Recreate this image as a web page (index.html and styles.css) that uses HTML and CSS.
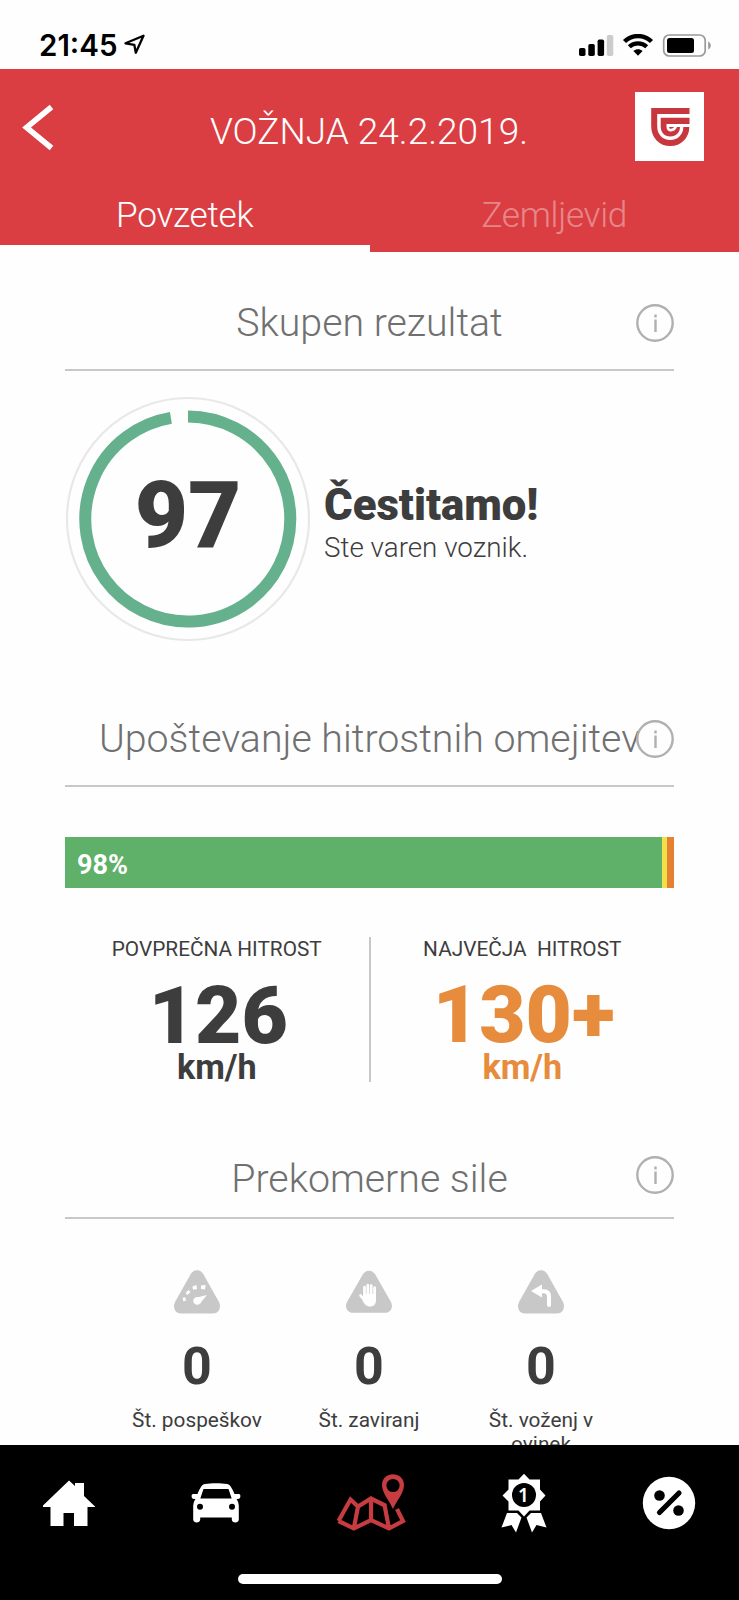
FILE: index.html
```html
<!DOCTYPE html>
<html lang="sl">
<head>
  <meta charset="UTF-8">
  <title>Vožnja 24.2.2019.</title>
  <meta name="viewport" content="width=device-width, initial-scale=1.0">
  <link rel="stylesheet" href="styles.css">
</head>
<body>
  <div class="status-bar">
    <div class="clock">
      <span class="time">21:45</span>
      <svg class="location" width="22" height="22" viewBox="0 0 22 22"><path d="M1.500 9.300 L19.500 1.800 L11.800 18.800 L10.300 10.800 Z" fill="none" stroke="#000" stroke-width="2.300" stroke-linejoin="round"/></svg>
    </div>
    <svg class="signals" width="134" height="24" viewBox="0 0 134 24">
      <rect x="1" y="14" width="6.5" height="8" rx="1.7"/>
      <rect x="10.300" y="10" width="6.500" height="12" rx="1.7"/>
      <rect x="19.600" y="5.500" width="6.500" height="16.500" rx="1.7"/>
      <rect x="28.800" y="1" width="6.500" height="21" rx="1.7" fill="#ccc"/>
      <path d="M46.500 7.500 C54 .2 66 .2 73.500 7.500" fill="none" stroke="#000" stroke-width="4.400"/>
      <path d="M51.300 12.800 C56 8.300 64 8.300 68.700 12.800" fill="none" stroke="#000" stroke-width="4.200"/>
      <path d="M55.400 17 C58 14.600 62 14.600 64.600 17 L60 21.700 Z"/>
      <rect x="85.700" y="1" width="41.500" height="21" rx="5.500" fill="none" stroke="#999" stroke-width="1.700"/>
      <rect x="89" y="4" width="27" height="15" rx="2.500"/>
      <path d="M130.200 7.500 C133.600 9 133.600 14 130.200 15.500 Z" fill="#999"/>
    </svg>
  </div>

  <div class="header">
    <div class="title-row">
      <svg class="back" width="36" height="50" viewBox="0 0 36 50"><path d="M31.500 5 L6.500 25.500 L31.500 46" fill="none" stroke="#fff" stroke-width="5.500"/></svg>
      <h1>VOŽNJA 24.2.2019.</h1>
      <div class="logo">
        <svg width="40" height="40" viewBox="0 0 40 40">
          <path d="M39.500 4 H4.200 V19.500 C4.200 29 11 36 20.300 36 C29.500 36 36.300 29 36.300 20" fill="none" stroke="#c8373e" stroke-width="6"/>
          <path d="M39.500 10.700 V17 H18 V20 H30 C30 25.500 26 29.500 20.300 29.500 C14.500 29.500 10.700 25.500 10.700 19.500 V10.700 Z" fill="#c8373e"/>
          <path d="M39.500 18.400 H17.800 V20 C17.800 24.500 24 24 25.800 19.500" fill="none" stroke="#fff" stroke-width="2.600"/>
        </svg>
      </div>
    </div>
    <div class="tabs">
      <div class="tab active">Povzetek</div>
      <div class="tab">Zemljevid</div>
    </div>
  </div>

  <div class="content">
    <div class="section-title">
      <h2>Skupen rezultat</h2>
      <svg class="info" width="38" height="38" viewBox="0 0 38 38"><circle cx="19" cy="19" r="17.700"/><path d="M19.500 15.500 V28 M19.500 10.500 V13.500"/></svg>
    </div>
    <div class="score">
      <div class="ring">
        <svg width="244" height="246" viewBox="0 0 244 246" fill="none">
          <circle cx="122" cy="123" r="121" stroke="#e8e8e8" stroke-width="2.200"/>
          <path d="M122 20.500 A102.500 102.500 0 1 1 104.900 21.900" stroke="#65b18d" stroke-width="12"/>
        </svg>
        <span class="score-value">97</span>
      </div>
      <div class="message">
        <div class="congrats">Čestitamo!</div>
        <div class="note">Ste varen voznik.</div>
      </div>
    </div>

    <div class="section-title speed-title">
      <h2>Upoštevanje hitrostnih omejitev</h2>
      <svg class="info" width="38" height="38" viewBox="0 0 38 38"><circle cx="19" cy="19" r="17.700"/><path d="M19.500 15.500 V28 M19.500 10.500 V13.500"/></svg>
    </div>
    <div class="bar">
      <div class="bar-ok">98%</div>
      <div class="bar-warn"></div>
      <div class="bar-over"></div>
    </div>
    <div class="speeds">
      <div class="speed">
        <div class="speed-label">POVPREČNA HITROST</div>
        <div class="speed-value">126</div>
        <div class="speed-unit">km/h</div>
      </div>
      <div class="speed max">
        <div class="speed-label">NAJVEČJA&nbsp; HITROST</div>
        <div class="speed-value">130+</div>
        <div class="speed-unit">km/h</div>
      </div>
    </div>

    <div class="section-title forces-title">
      <h2>Prekomerne sile</h2>
      <svg class="info" width="38" height="38" viewBox="0 0 38 38"><circle cx="19" cy="19" r="17.700"/><path d="M19.500 15.500 V28 M19.500 10.500 V13.500"/></svg>
    </div>
    <div class="forces">
      <div class="force">
        <svg width="46" height="44" viewBox="0 0 46 44">
          <path class="tri" d="M17 3.500 C20 -1 26 -1 29 3.500 L45 32 C47.500 37.500 45 43.500 39 43.500 H7 C1 43.500 -1.500 37.500 1 32 Z"/>
          <path d="M10.500 31 L10 27.500 M12.500 24 L15.500 21" stroke="#fff" stroke-width="2.800"/>
          <path d="M18.500 16.500 l4 -1.500 l.5 4 l-4 .8 z M27 15.500 l4.500 -.5 l-.5 4.500 l-4 -.5 z" fill="#fff"/>
          <path d="M33 25 L27.500 31.500 C26.500 36 19.500 35.500 19.300 31 C19.200 27.500 22 26.500 25 27 Z" fill="#fff"/>
        </svg>
        <div class="force-value">0</div>
        <div class="force-label">Št. pospeškov</div>
      </div>
      <div class="force">
        <svg width="46" height="44" viewBox="0 0 46 44">
          <path class="tri" d="M17 4 C20 -.5 26 -.5 29 4 L45 32 C47.500 37 45 42.700 39 42.700 H7 C1 42.700 -1.500 37 1 32 Z"/>
          <path d="M18.500 27 V17 M21.800 26 V15 M25.200 26 V15.500 M28.600 27 V17.500 M14.500 25.500 L19 31" stroke="#fff" stroke-width="2.700" stroke-linecap="round"/>
          <path d="M17.200 24 H30 V30 C30 34.500 27.500 36.500 24 36.500 C20 36.500 18 34 16.500 30 Z" fill="#fff"/>
        </svg>
        <div class="force-value">0</div>
        <div class="force-label">Št. zaviranj</div>
      </div>
      <div class="force">
        <svg width="46" height="44" viewBox="0 0 46 44">
          <path class="tri" d="M17 3.500 C20 -1 26 -1 29 3.500 L45 32 C47.500 37.500 45 43.500 39 43.500 H7 C1 43.500 -1.500 37.500 1 32 Z"/>
          <path d="M13 21 L24 14.500 V27.500 Z" fill="#fff"/>
          <path d="M22 21.200 H26 C30 21.200 31 24 31 27 V35" fill="none" stroke="#fff" stroke-width="4" stroke-linecap="round"/>
        </svg>
        <div class="force-value">0</div>
        <div class="force-label">Št. voženj v ovinek</div>
      </div>
    </div>
  </div>

  <div class="nav">
    <div class="nav-items">
      <svg width="54" height="60" viewBox="0 0 54 60" fill="#fff"><path d="M1 32.500 L27 7.500 L33 13 V10 H42 V23 L53 33.500 V34 H45.500 V53 H32 V40 H21.500 V53 H8.500 V34 H1 Z"/></svg>
      <svg width="50" height="60" viewBox="0 0 50 60" fill="#fff">
        <path fill-rule="evenodd" d="M14 11 C20 10 30 10 36 11 C39 11.500 40.500 14 43.500 21 H48 C50 21 50 26 47 26 H45.500 C48 29.500 47.800 32.500 47.800 35.500 V46.500 C47.800 50.500 40.800 50.500 40.800 46.500 V44.500 H9.200 V46.500 C9.200 50.500 2.200 50.500 2.200 46.500 V35.500 C2.200 32.500 2 29.500 4.500 26 H3 C0 26 0 21 2 21 H6.500 C9.500 14 11 11.500 14 11 Z M12.500 16 L9.300 25.500 H40.700 L37.500 16 Z"/>
        <circle cx="9" cy="33.700" r="3" fill="#000"/><circle cx="41" cy="33.700" r="3" fill="#000"/>
      </svg>
      <svg width="70" height="60" viewBox="0 0 70 60" fill="none" stroke="#c73c41" stroke-width="4.200">
        <path d="M2.500 48 L14.500 26.500 L22 33.500 L35 25.500 L50 33 M2.500 48 L17.800 55.500 L35 47 L53 55.500 L67 48 L61 36 M22 33.500 L17.800 55.500 M35 25.500 V47 M48.500 32 L53 55.500"/>
        <path d="M57 36 C53 27 46 20 46 12 C46 -2.500 68 -2.500 68 12 C68 20 61 27 57 36 Z" fill="#c73c41" stroke="none"/>
        <circle cx="57" cy="12.500" r="6.600" fill="#000" stroke="none"/>
      </svg>
      <svg width="46" height="60" viewBox="0 0 46 60" fill="#fff">
        <path d="M23 .8 L28.500 6.500 H39 V16.500 L44.500 22.500 L39 28.500 V37.500 H28.500 L23 43.500 L17.500 37.500 H7.500 V28.500 L1.500 22.500 L7.500 16.500 V6.500 H17.500 Z"/>
        <circle cx="23" cy="22" r="12" fill="#000"/>
        <text class="rank" x="22.500" y="28.800">1</text>
        <path d="M6 40 H16 L20.500 44.500 L15 59.500 L10.500 52 L.5 54.500 Z M40 40 H30 L25.500 44.500 L31 59.500 L35.500 52 L45.500 54.500 Z"/>
      </svg>
      <svg width="54" height="60" viewBox="0 0 54 60">
        <circle cx="27" cy="30" r="26.200" fill="#fff"/>
        <path d="M17.500 39.500 L37 20" stroke="#000" stroke-width="5.200" stroke-linecap="round"/>
        <circle cx="17.500" cy="22.500" r="5.300"/><circle cx="36.500" cy="37.500" r="5.300"/>
      </svg>
    </div>
    <div class="home-indicator"></div>
  </div>
</body>
</html>
```
FILE: styles.css
```css
* {
  box-sizing: border-box;
}
body {
  margin: 0;
  height: 1600px;
  overflow: hidden;
  display: flex;
  flex-direction: column;
  font-family: Roboto, "Liberation Sans", sans-serif;
  background-color: #fefefe;
  color: #3d3d3d;
}
svg {
  display: block;
  flex-shrink: 0;
}
h1, h2 {
  margin: 0;
  font-weight: 300;
}
.status-bar {
  flex: none;
  height: 69px;
  padding: 28px 27px 0 39px;
  display: flex;
  justify-content: space-between;
}
.clock {
  display: flex;
  gap: 7px;
}
.time {
  font-family: Inter, sans-serif;
  font-size: 29.5px;
  font-weight: 600;
  line-height: 35px;
  color: #000;
}
.location {
  margin-top: 6px;
}
.signals {
  margin-top: 6px;
}
.header {
  flex: none;
  height: 183px;
  background-color: #da3e42;
  color: #fff;
}
.title-row {
  height: 116px;
  padding: 23px 35px 0 20px;
  display: flex;
  justify-content: space-between;
}
.back {
  margin-top: 10px;
}
h1 {
  font-size: 37px;
  line-height: 44px;
  margin-top: 18px;
  margin-left: 47px;
}
.logo {
  width: 69px;
  height: 69px;
  background-color: #fff;
  display: flex;
  align-items: center;
  justify-content: center;
}
.tabs {
  display: flex;
  height: 67px;
}
.tab {
  flex: 1;
  text-align: center;
  font-size: 35.2px;
  font-weight: 300;
  letter-spacing: -0.3px;
  line-height: 60px;
  color: rgba(255, 255, 255, 0.4);
}
.tab.active {
  color: #fff;
  border-bottom: 7px solid #fefefe;
}
.content {
  flex: 1;
  min-height: 0;
  overflow: hidden;
  padding: 0 65px;
}
.section-title {
  position: relative;
  height: 119px;
  padding-top: 48px;
  border-bottom: 2px solid #c8c8c8;
}
h2 {
  font-size: 39.3px;
  line-height: 46px;
  text-align: center;
  white-space: nowrap;
  color: #707070;
}
/* sits over the end of long titles */
.info {
  position: absolute;
  right: 0;
  top: 52px;
  fill: none;
  stroke: #b0b0b0;
  stroke-width: 2.4;
}
.score {
  display: flex;
  margin-top: 25px;
  gap: 14px;
}
.ring {
  display: grid;
  margin-left: 1px;
}
.ring svg, .score-value {
  grid-area: 1 / 1;
}
.score-value {
  place-self: center;
  padding-bottom: 6px;
  font-size: 92px;
  font-weight: 900;
  line-height: 100px;
}
.message {
  padding-top: 84px;
}
.congrats {
  font-size: 43.7px;
  font-weight: 900;
  line-height: 50px;
}
.note {
  margin-top: 2px;
  font-size: 27.8px;
  font-weight: 300;
  line-height: 32px;
}
.speed-title {
  margin-top: 26px;
}
.bar {
  display: flex;
  height: 51px;
  margin-top: 50px;
}
.bar-ok {
  flex: 1;
  padding-left: 12px;
  font-size: 27px;
  font-weight: 700;
  line-height: 57px;
  color: #fff;
  background-color: #5fb069;
}
.bar-warn {
  width: 5px;
  background-color: #f2e04a;
}
.bar-over {
  width: 7px;
  background-color: #e58133;
}
.speeds {
  display: flex;
  height: 145px;
  margin-top: 49px;
}
.speed {
  flex: 1;
  text-align: center;
}
.speed.max {
  border-left: 2px solid #c8c8c8;
}
.speed-label {
  font-size: 20.8px;
  line-height: 25px;
}
.speed-value {
  margin-top: 22px;
  padding-left: 3px;
  font-size: 80px;
  font-weight: 900;
  line-height: 64px;
}
.speed-unit {
  font-size: 34.2px;
  font-weight: 700;
  line-height: 38px;
}
.max .speed-value, .max .speed-unit {
  color: #e68c3c;
}
.max .speed-value {
  margin-bottom: 2px;
  line-height: 62px;
}
.forces-title {
  margin-top: 18px;
  padding-top: 56px;
}
.forces-title .info {
  top: 56px;
}
.forces {
  display: flex;
  padding: 51px 47px 0 46px;
}
.force {
  flex: 1;
  display: flex;
  flex-direction: column;
  align-items: center;
}
.tri {
  fill: #c8c8c8;
}
.force-value {
  margin-top: 23px;
  font-size: 52px;
  font-weight: 700;
  line-height: 60px;
}
.force-label {
  margin-top: 11px;
  width: 140px;
  font-size: 20.8px;
  line-height: 24px;
  text-align: center;
}
.nav {
  flex: none;
  height: 155px;
  background-color: #000;
}
.nav-items {
  display: flex;
  justify-content: space-between;
  padding: 28px 43px 0 42px;
  height: 129px;
}
.rank {
  font-family: "Noto Sans", sans-serif;
  font-size: 19px;
  font-weight: 600;
  text-anchor: middle;
}
.home-indicator {
  width: 264px;
  height: 10px;
  margin: 0 auto;
  border-radius: 5px;
  background-color: #fff;
}
```
